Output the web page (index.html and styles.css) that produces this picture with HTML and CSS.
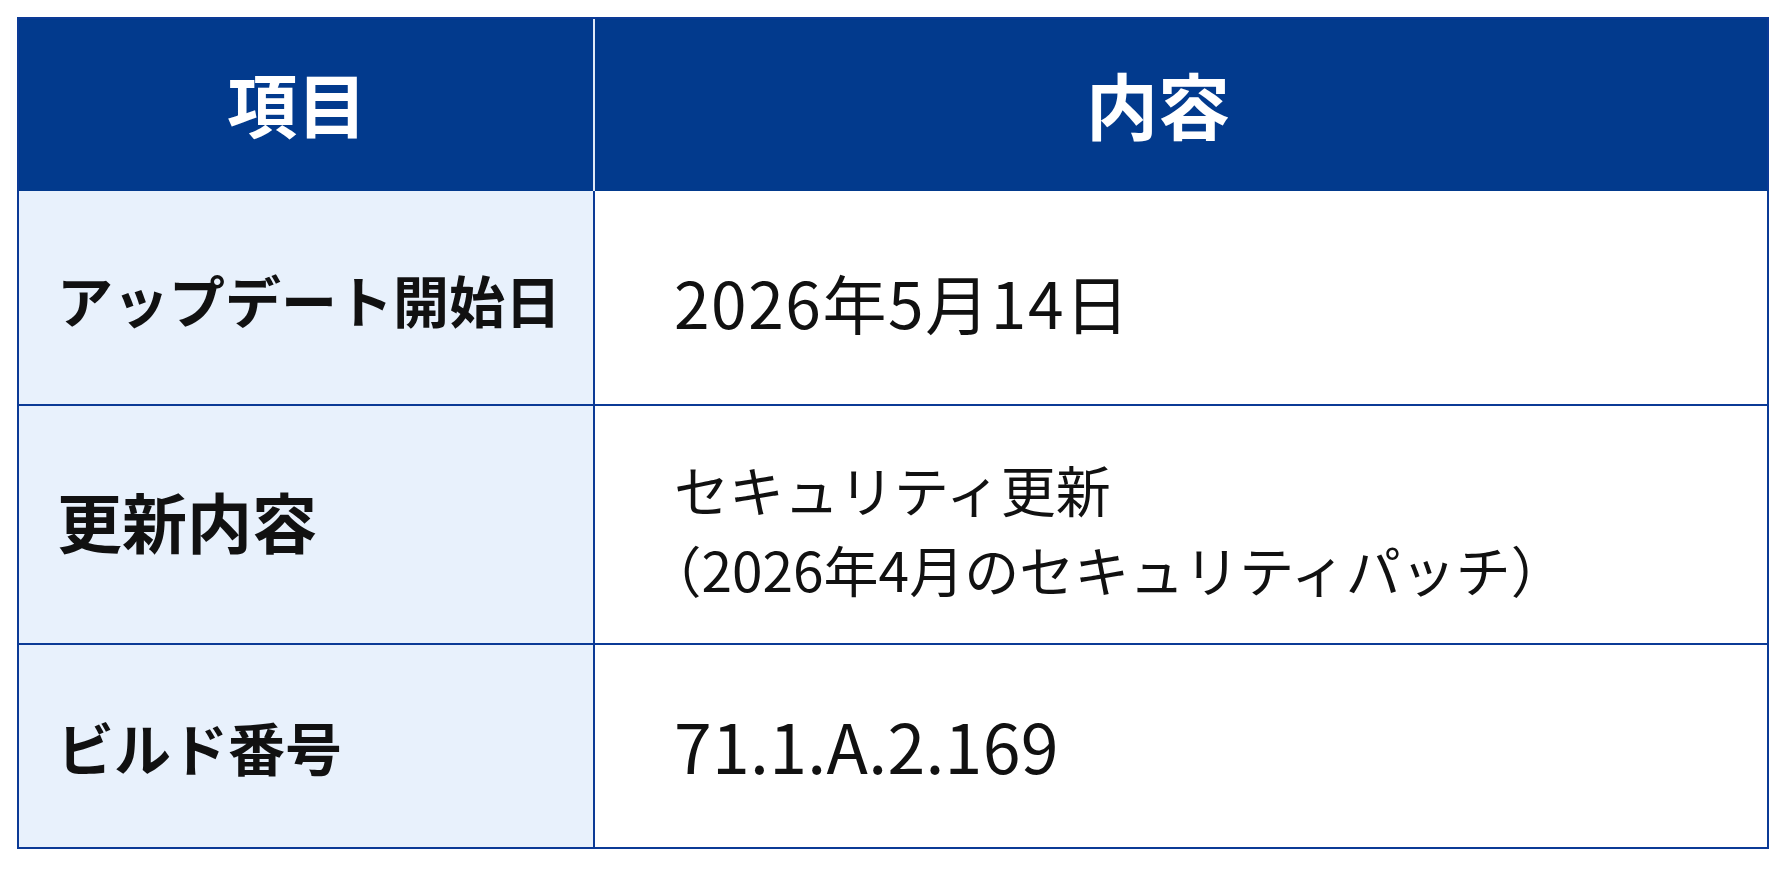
FILE: index.html
```html
<!DOCTYPE html>
<html lang="ja">
<head>
<meta charset="utf-8">
<title>アップデート情報</title>
<link rel="stylesheet" href="styles.css">
</head>
<body>
<div class="info-table">
  <div class="cell head head-left">項目</div>
  <div class="cell head head-right">内容</div>

  <div class="cell label label-md">アップデート開始日</div>
  <div class="cell value value-lg">2026年5月14日</div>

  <div class="cell label label-lg sep">更新内容</div>
  <div class="cell value value-sm sep">
    <div>セキュリティ更新</div>
    <div><span class="paren">（</span>2026年4月のセキュリティパッチ<span class="paren">）</span></div>
  </div>

  <div class="cell label label-md2 sep">ビルド番号</div>
  <div class="cell value value-xl sep">71.1.A.2.169</div>
</div>
</body>
</html>
```

FILE: styles.css
```css
* { box-sizing: border-box; }

html, body {
  margin: 0;
  padding: 0;
  background: #ffffff;
}

body {
  font-family: "Noto Sans CJK JP", "Noto Sans", sans-serif;
  color: #111111;
}

.info-table {
  margin: 17px 0 0 17px;
  width: 1752px;
  height: 832px;
  border: 2px solid #0b3a96;
  display: grid;
  grid-template-columns: 576px 1172px;
  grid-template-rows: 172px 213px 239px 204px;
}

.cell {
  display: flex;
  align-items: center;
}

.head {
  background: #023a8d;
  color: #ffffff;
  font-weight: 700;
  font-size: 70px;
  justify-content: center;
  padding-bottom: 6px;
}

.head-left {
  border-right: 2px solid #dfe8f6;
  padding-right: 18px;
}

.head-right {
  font-size: 72px;
  padding-right: 46px;
}

.label {
  background: #e8f1fc;
  border-right: 2px solid #0b3a96;
  font-weight: 700;
  padding-left: 38px;
}

.label-md { font-size: 56px; padding-top: 2px; }
.label-lg { font-size: 65px; padding-bottom: 10px; }
.label-md2 { font-size: 57px; padding-top: 0; }

.value {
  background: #ffffff;
  padding-left: 79px;
  font-weight: 400;
}

.value-lg { font-size: 64px; padding-top: 6px; letter-spacing: 1.6px; }
.value-sm {
  font-size: 55px;
  flex-direction: column;
  align-items: flex-start;
  justify-content: center;
  line-height: 80px;
  padding-top: 6px;
}
.value-xl { font-size: 68px; padding-bottom: 4px; letter-spacing: 0.3px; }

.paren {
  font-feature-settings: "halt";
}

.sep {
  border-top: 2px solid #0b3a96;
}
```
